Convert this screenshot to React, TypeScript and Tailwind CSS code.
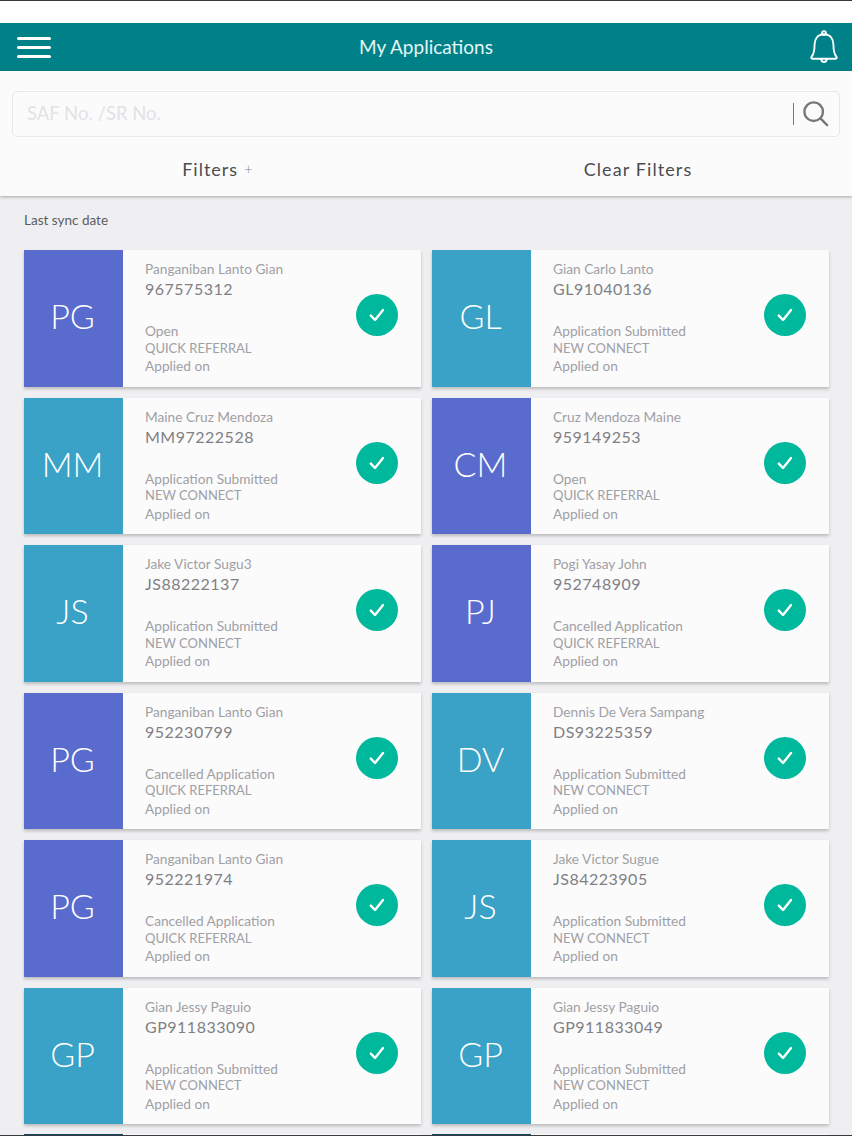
import React from "react";

type Item = { name: string; id: string; status: string; kind: string; initials: string; purple: boolean };

const items: Item[] = [
  { name: "Panganiban Lanto Gian", id: "967575312", status: "Open", kind: "QUICK REFERRAL", initials: "PG", purple: true },
  { name: "Gian Carlo Lanto", id: "GL91040136", status: "Application Submitted", kind: "NEW CONNECT", initials: "GL", purple: false },
  { name: "Maine Cruz Mendoza", id: "MM97222528", status: "Application Submitted", kind: "NEW CONNECT", initials: "MM", purple: false },
  { name: "Cruz Mendoza Maine", id: "959149253", status: "Open", kind: "QUICK REFERRAL", initials: "CM", purple: true },
  { name: "Jake Victor Sugu3", id: "JS88222137", status: "Application Submitted", kind: "NEW CONNECT", initials: "JS", purple: false },
  { name: "Pogi Yasay John", id: "952748909", status: "Cancelled Application", kind: "QUICK REFERRAL", initials: "PJ", purple: true },
  { name: "Panganiban Lanto Gian", id: "952230799", status: "Cancelled Application", kind: "QUICK REFERRAL", initials: "PG", purple: true },
  { name: "Dennis De Vera Sampang", id: "DS93225359", status: "Application Submitted", kind: "NEW CONNECT", initials: "DV", purple: false },
  { name: "Panganiban Lanto Gian", id: "952221974", status: "Cancelled Application", kind: "QUICK REFERRAL", initials: "PG", purple: true },
  { name: "Jake Victor Sugue", id: "JS84223905", status: "Application Submitted", kind: "NEW CONNECT", initials: "JS", purple: false },
  { name: "Gian Jessy Paguio", id: "GP911833090", status: "Application Submitted", kind: "NEW CONNECT", initials: "GP", purple: false },
  { name: "Gian Jessy Paguio", id: "GP911833049", status: "Application Submitted", kind: "NEW CONNECT", initials: "GP", purple: false },
];

function Card({ item }: { item: Item }) {
  return (
    <div className="flex h-[136.5px] bg-[#fbfbfc] shadow-[0_2px_3px_rgba(0,0,0,0.22)]">
      <div
        className={`flex w-[99px] shrink-0 items-center justify-center pb-[5px] pr-[2px] text-[34px] font-light text-white ${
          item.purple ? "bg-[#5a6bce]" : "bg-[#39a2c6]"
        }`}
      >
        {item.initials}
      </div>
      <div className="flex min-w-0 flex-1 items-center pl-[22px] pr-[23px]">
        <div className="flex min-w-0 flex-1 flex-col pb-[3px] text-[13.7px] leading-[17.5px] text-[#a0a0a4]">
          <div className="text-[13.7px] leading-[20px]">{item.name}</div>
          <div className="mb-[23px] text-[16px] leading-[20px] tracking-[0.5px] text-[#808084]">{item.id}</div>
          <div>{item.status}</div>
          <div className="text-[13px]">{item.kind}</div>
          <div>Applied on</div>
        </div>
        <div className="mb-[6px] flex h-[42px] w-[42px] shrink-0 items-center justify-center rounded-full bg-[#00b89c]">
          <svg width="18" height="18" viewBox="0 0 18 18" fill="none">
            <path d="M2.8 9.6 L7 14 L15 4" stroke="white" strokeWidth="2.4" strokeLinecap="round" strokeLinejoin="round" />
          </svg>
        </div>
      </div>
    </div>
  );
}

export default function App() {
  return (
    <div className="relative flex h-[1136px] w-[852px] flex-col overflow-hidden bg-[#efeff1] font-['Lato',sans-serif]">
      <div className="h-[23px] shrink-0 border-t border-[#3a3a3c] bg-white" />
      <header className="grid h-[48px] shrink-0 grid-cols-[1fr_auto_1fr] items-center bg-[#008087] pl-[17px] pr-[13px]">
        <div className="flex w-[34px] flex-col gap-[6px]">
          <div className="h-[3px] rounded-full bg-white" />
          <div className="h-[3px] rounded-full bg-white" />
          <div className="h-[3px] rounded-full bg-white" />
        </div>
        <div className="mr-[4px] text-[19px] text-[#e4f6f6]">My Applications</div>
        <svg className="justify-self-end" width="30" height="34" viewBox="0 0 30 36" fill="none" stroke="white" strokeWidth="2" strokeLinejoin="round">
          <path d="M15 4.5 C8 4.5 5 10 5 15.5 C5 21.5 4.6 25 1.8 28.4 C1 29.5 1.5 30.4 2.8 30.4 H27.2 C28.5 30.4 29 29.5 28.2 28.4 C25.4 25 25 21.5 25 15.5 C25 10 22 4.5 15 4.5 Z" />
          <circle cx="15" cy="3.2" r="2" />
          <path d="M12 30.6 C12.2 33 13.6 34 15 34 C16.4 34 17.8 33 18 30.6" />
        </svg>
      </header>
      <div className="shrink-0 bg-[#fbfbfc] shadow-[0_1px_3px_rgba(0,0,0,0.3)]">
        <div className="px-[12px] pt-[20px]">
          <div className="flex h-[46px] items-center rounded-[5px] border border-[#e8e8ea] pl-[14px] pr-[10px]">
            <div className="flex-1 text-[18.5px] text-[#e2e2e5]">SAF No. /SR No.</div>
            <div className="mr-[9px] h-[22px] w-px bg-[#77777b]" />
            <svg width="26" height="26" viewBox="0 0 28 28" fill="none" stroke="#77777b" strokeWidth="2.6">
              <circle cx="11.5" cy="11.5" r="10" />
              <path d="M18.8 18.8 L26 26" strokeLinecap="round" />
            </svg>
          </div>
        </div>
        <div className="flex h-[59px] items-center pt-[6px]">
          <div className="flex w-[436px] items-center justify-center text-[18px] tracking-[1px] text-[#4c4c50]">
            Filters<span className="ml-[6px] text-[15px] font-light text-[#8a8a8e]">+</span>
          </div>
          <div className="flex w-[404px] items-center justify-center text-[18px] tracking-[1.1px] text-[#4c4c50]">
            Clear Filters
          </div>
        </div>
      </div>
      <div className="shrink-0 px-[24px] pt-[16px] text-[13.5px] leading-[16px] text-[#5c5c60]">Last sync date</div>
      <div className="mt-[22px] grid w-[829px] shrink-0 grid-cols-[397px_397px] gap-x-[11px] gap-y-[11px] pl-[24px]">
        {items.map((item, i) => (
          <Card key={i} item={item} />
        ))}
        <div className="-mt-[1.5px] flex h-[137px] bg-[#fbfbfc]">
          <div className="w-[99px] bg-[#0b4a62]" />
        </div>
        <div className="-mt-[1.5px] flex h-[137px] bg-[#fbfbfc]">
          <div className="w-[99px] bg-[#0b4a62]" />
        </div>
      </div>
      <div className="absolute inset-x-0 bottom-0 h-px bg-[#3a3a3c]" />
    </div>
  );
}
